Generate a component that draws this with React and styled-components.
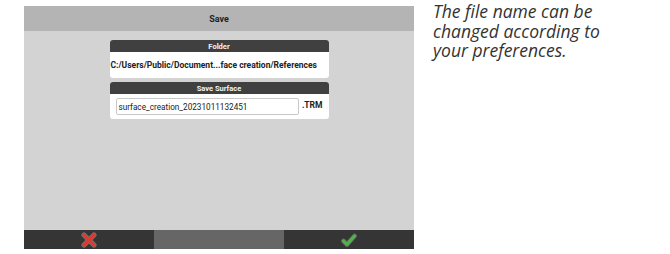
import React from 'react';
import styled, { createGlobalStyle } from 'styled-components';

const GlobalStyle = createGlobalStyle`
  body {
    margin: 0;
    background: #ffffff;
    font-family: Roboto, "Liberation Sans", sans-serif;
  }
`;

const Page = styled.div`
  display: flex;
  align-items: flex-start;
  padding: 6px 0 0 24px;
`;

const Screen = styled.div`
  width: 390px;
  height: 243px;
  display: flex;
  flex-direction: column;
  background: #d3d3d3;
`;

const TitleBar = styled.div`
  height: 25px;
  display: flex;
  align-items: center;
  justify-content: center;
  background: #b4b4b4;
  color: #222;
  font-size: 9px;
  font-weight: 700;
`;

const Body = styled.div`
  flex: 1;
  display: flex;
  flex-direction: column;
  align-items: center;
  gap: 4px;
  padding-top: 9px;
`;

const Section = styled.div`
  width: 219px;
  background: #ffffff;
  border-radius: 3px;
  overflow: hidden;
`;

const SectionHeader = styled.div`
  height: 12px;
  display: flex;
  align-items: center;
  justify-content: center;
  background: #404040;
  color: #f2f2f2;
  font-size: 7.5px;
  font-weight: 700;
`;

const SectionBody = styled.div`
  height: ${p => p.$h}px;
  display: flex;
  align-items: center;
  padding: 0 6px 0 1px;
  gap: 3px;
  color: #222;
`;

const Path = styled.span`
  font-size: 8.5px;
  font-weight: 700;
  white-space: nowrap;
`;

const NameInput = styled.div`
  flex: 1;
  height: 17px;
  margin-left: 5px;
  box-sizing: border-box;
  border: 1px solid #c8c8c8;
  border-radius: 2px;
  display: flex;
  align-items: center;
  padding-left: 2px;
  font-size: 8.2px;
  color: #222;
`;

const Ext = styled.span`
  font-size: 8.5px;
  font-weight: 700;
  margin-bottom: 3px;
`;

const Footer = styled.div`
  height: 19px;
  display: grid;
  grid-template-columns: 130px 130px 130px;
`;

const FooterButton = styled.div`
  display: flex;
  align-items: center;
  justify-content: center;
  background: ${p => (p.$blank ? '#666666' : '#353535')};
`;

const Note = styled.p`
  margin: -4px 0 0 19px;
  width: 200px;
  font-family: "Open Sans", "DejaVu Sans", sans-serif;
  font-style: italic;
  font-size: 17.5px;
  line-height: 19.5px;
  color: #333333;
`;

const CrossIcon = () => (
  <svg width="16" height="16" viewBox="0 0 16 16">
    <path
      d="M3 3 L13 13 M13 3 L3 13"
      stroke="#777"
      strokeWidth="5"
      strokeLinecap="round"
    />
    <path
      d="M3 3 L13 13 M13 3 L3 13"
      stroke="#d93a32"
      strokeWidth="3.4"
      strokeLinecap="round"
    />
  </svg>
);

const CheckIcon = () => (
  <svg width="16" height="16" viewBox="0 0 16 16">
    <path
      d="M2.5 9 L6 12.5 L13.5 4"
      fill="none"
      stroke="#6a6a6a"
      strokeWidth="4.6"
      strokeLinecap="round"
      strokeLinejoin="round"
    />
    <path
      d="M2.5 9 L6 12.5 L13.5 4"
      fill="none"
      stroke="#4fb34c"
      strokeWidth="3"
      strokeLinecap="round"
      strokeLinejoin="round"
    />
  </svg>
);

export default function App() {
  return (
    <>
      <GlobalStyle />
      <Page>
        <Screen>
          <TitleBar>Save</TitleBar>
          <Body>
            <Section>
              <SectionHeader>Folder</SectionHeader>
              <SectionBody $h={26}>
                <Path>C:/Users/Public/Document...face creation/References</Path>
              </SectionBody>
            </Section>
            <Section>
              <SectionHeader>Save Surface</SectionHeader>
              <SectionBody $h={25}>
                <NameInput>surface_creation_20231011132451</NameInput>
                <Ext>.TRM</Ext>
              </SectionBody>
            </Section>
          </Body>
          <Footer>
            <FooterButton><CrossIcon /></FooterButton>
            <FooterButton $blank />
            <FooterButton><CheckIcon /></FooterButton>
          </Footer>
        </Screen>
        <Note>The file name can be changed according to your preferences.</Note>
      </Page>
    </>
  );
}
